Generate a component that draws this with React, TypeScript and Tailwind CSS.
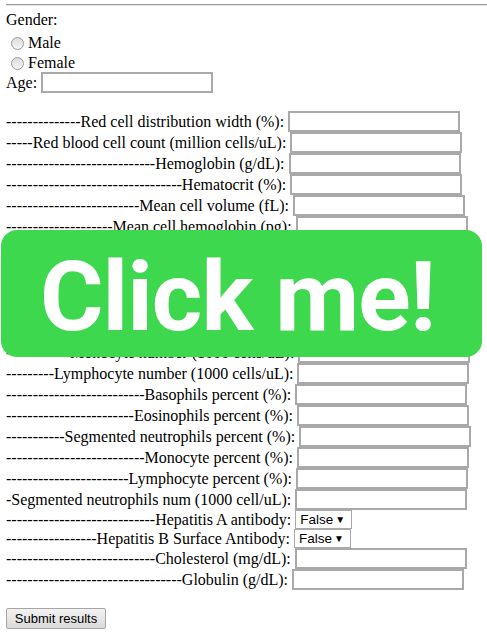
import React from "react";

type Row = { label: string; kind?: "input" | "select" };

const rows: Row[] = [
  { label: "--------------Red cell distribution width (%):" },
  { label: "-----Red blood cell count (million cells/uL):" },
  { label: "----------------------------Hemoglobin (g/dL):" },
  { label: "---------------------------------Hematocrit (%):" },
  { label: "-------------------------Mean cell volume (fL):" },
  { label: "--------------------Mean cell hemoglobin (pg):" },
  { label: "-------------Platelet count (1000 cells/uL):" },
  { label: "-------------------Mean platelet volume (fL):" },
  { label: "------White blood cell count (1000 cells/uL):" },
  { label: "--------Eosinophils number (1000 cells/uL):" },
  { label: "---------Basophils number (1000 cells/uL):" },
  { label: "------------Monocyte number (1000 cells/uL):" },
  { label: "---------Lymphocyte number (1000 cells/uL):" },
  { label: "--------------------------Basophils percent (%):" },
  { label: "------------------------Eosinophils percent (%):" },
  { label: "-----------Segmented neutrophils percent (%):" },
  { label: "--------------------------Monocyte percent (%):" },
  { label: "-----------------------Lymphocyte percent (%):" },
  { label: "-Segmented neutrophils num (1000 cell/uL):" },
  { label: "----------------------------Hepatitis A antibody:", kind: "select" },
  { label: "-----------------Hepatitis B Surface Antibody:", kind: "select" },
  { label: "----------------------------Cholesterol (mg/dL):" },
  { label: "---------------------------------Globulin (g/dL):" },
];

const TextBox = () => (
  <input
    type="text"
    className="w-[172px] h-[21px] border-2 border-[#a9a9a9] bg-white outline-none"
  />
);

const FakeSelect = () => (
  <span className="relative inline-flex items-center w-[57px] h-[19px] border border-[#a9a9a9] bg-white pl-[4px] text-[13.5px] text-black [font-family:'Liberation_Sans',Arial,sans-serif]">
    False
    <span className="absolute right-[6px] top-[3px] text-[10px] leading-[12px]">▼</span>
  </span>
);

const Radio = ({ label }: { label: string }) => (
  <div className="flex items-center h-[20px]">
    <span className="ml-[5px] mr-[4px] w-[13px] h-[13px] rounded-full border border-[#9a9a9a] bg-gradient-to-b from-[#dcdcdc] to-[#f6f6f6]" />
    <span>{label}</span>
  </div>
);

export default function App() {
  return (
    <div className="relative w-[487px] h-[642px] overflow-hidden bg-white text-black text-[16px] leading-[20px] [font-family:'Liberation_Serif','Times_New_Roman',serif]">
      <div className="flex flex-col pl-[6px]">
        <div className="mt-[4px] h-[2px] border-t border-b border-t-[#9c9c9c] border-b-[#e4e4e4]" />

        <div className="mt-[4px] h-[20px]">Gender:</div>
        <div className="mt-[3px]">
          <Radio label="Male" />
        </div>
        <div className="h-[19px] overflow-visible">
          <Radio label="Female" />
        </div>
        <div className="flex items-center h-[21px]">
          <span>Age:</span>
          <span className="ml-[4px]">
            <TextBox />
          </span>
        </div>

        <div className="mt-[18px] flex flex-col">
          {rows.map((r) => (
            <div
              key={r.label}
              className={`flex items-center whitespace-nowrap ${r.kind === "select" ? "h-[19px]" : "h-[21px]"}`}
            >
              <span>{r.label}</span>
              <span className="ml-[4px] flex">
                {r.kind === "select" ? <FakeSelect /> : <TextBox />}
              </span>
            </div>
          ))}
        </div>

        <div className="mt-[18px]">
          <button className="w-[100px] h-[21px] border border-[#a6a6a6] rounded-[2px] bg-gradient-to-b from-[#f2f2f2] to-[#dadada] text-[13px] leading-[19px] text-black [font-family:'Liberation_Sans',Arial,sans-serif]">
            Submit results
          </button>
        </div>
      </div>

      <button className="absolute left-[1px] top-[230px] w-[481px] h-[127px] rounded-[16px] bg-[#3dd84d] flex items-center justify-center pt-[8px] pr-[8px]">
        <span className="text-white font-bold text-[97px] leading-none tracking-[-1px] [font-family:Roboto,'Liberation_Sans',sans-serif]">
          Click me!
        </span>
      </button>
    </div>
  );
}
